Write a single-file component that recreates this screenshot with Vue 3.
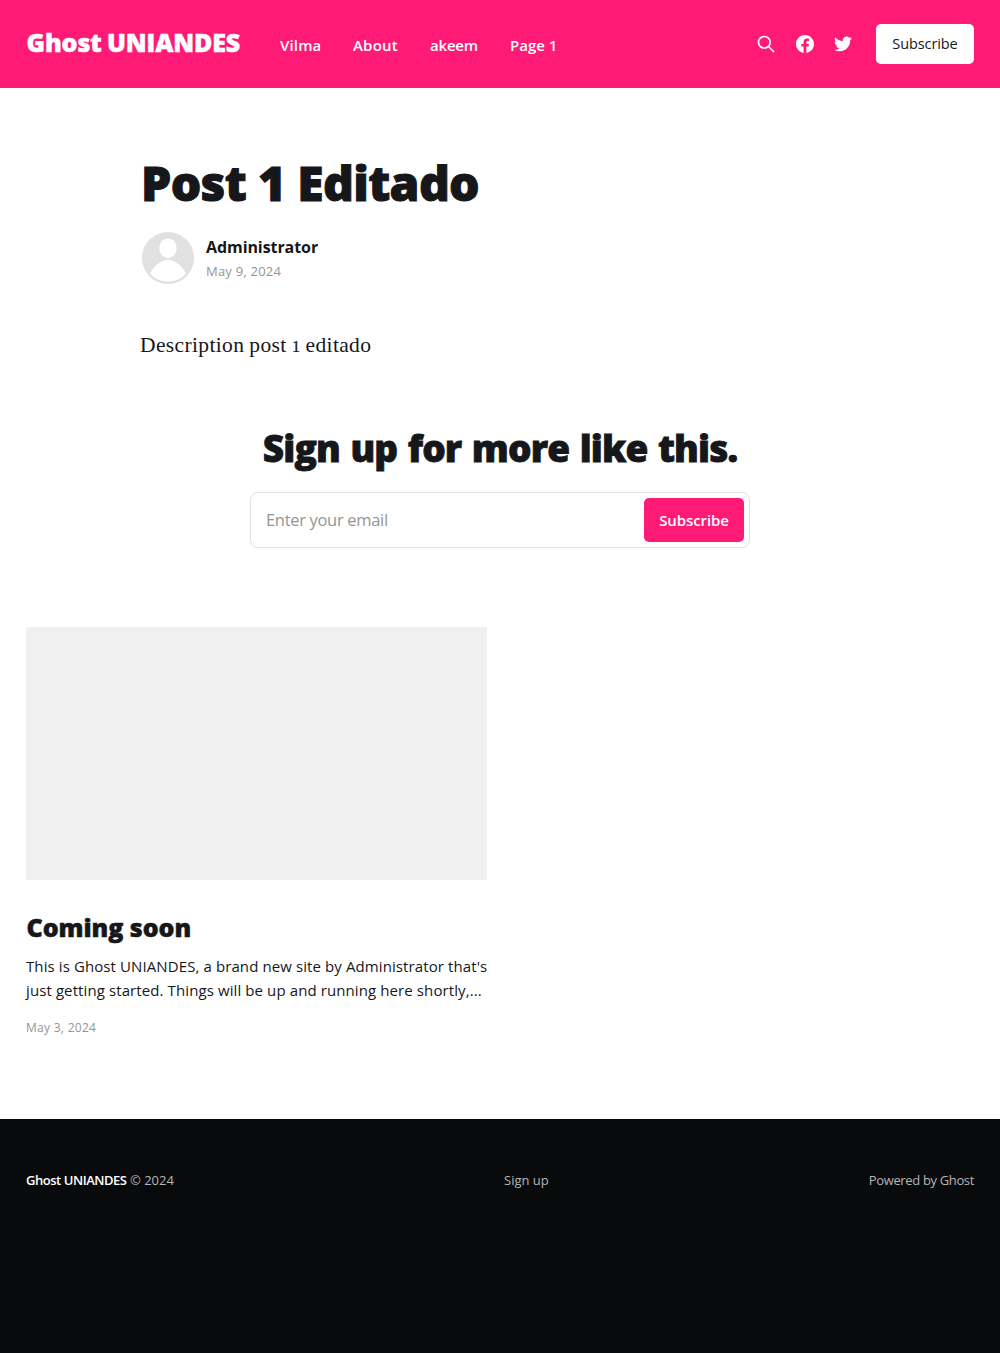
<script setup>
const nav = [
  { label: 'Vilma', cls: 'n1' },
  { label: 'About', cls: 'n2' },
  { label: 'akeem', cls: 'n3' },
  { label: 'Page 1', cls: 'n4' },
]
</script>

<template>
  <div class="site">
    <header class="head">
      <a class="logo"><span>Ghost UNIANDES</span></a>
      <nav class="menu">
        <a v-for="n in nav" :key="n.label" :class="n.cls">{{ n.label }}</a>
      </nav>
      <div class="actions">
        <svg class="search" width="20" height="20" viewBox="0 0 24 24" fill="none" stroke="#fff" stroke-width="2" stroke-linecap="round" stroke-linejoin="round">
          <path d="M21 21l-6-6m2-5a7 7 0 11-14 0 7 7 0 0114 0z" />
        </svg>
        <svg class="facebook" width="18" height="18" viewBox="0 0 24 24" fill="#fff">
          <path d="M23.9981 11.9991C23.9981 5.37216 18.626 0 11.9991 0C5.37216 0 0 5.37216 0 11.9991C0 17.9882 4.38789 22.9522 10.1242 23.8524V15.4676H7.07758V11.9991H10.1242V9.35553C10.1242 6.34826 11.9156 4.68714 14.6564 4.68714C15.9692 4.68714 17.3424 4.92149 17.3424 4.92149V7.87439H15.8294C14.3388 7.87439 13.8739 8.79933 13.8739 9.74824V11.9991H17.2018L16.6698 15.4676H13.8739V23.8524C19.6103 22.9522 23.9981 17.9882 23.9981 11.9991Z" />
        </svg>
        <svg class="twitter" width="18" height="18" viewBox="0 0 24 24" fill="#fff">
          <path d="M23.954 4.569a10 10 0 01-2.825.775 4.958 4.958 0 002.163-2.723c-.951.555-2.005.959-3.127 1.184a4.92 4.92 0 00-8.384 4.482C7.691 8.094 4.066 6.13 1.64 3.161a4.822 4.822 0 00-.666 2.475c0 1.71.87 3.213 2.188 4.096a4.904 4.904 0 01-2.228-.616v.061a4.923 4.923 0 003.946 4.827 4.996 4.996 0 01-2.212.085 4.937 4.937 0 004.604 3.417 9.868 9.868 0 01-6.102 2.105c-.39 0-.779-.023-1.17-.067a13.995 13.995 0 007.557 2.209c9.054 0 13.999-7.496 13.999-13.986 0-.209 0-.42-.015-.63a9.936 9.936 0 002.46-2.548l-.047-.02z" />
        </svg>
        <button class="join"><span>Subscribe</span></button>
      </div>
    </header>

    <main>
      <article class="post">
        <h1>Post 1 Editado</h1>
        <div class="byline">
          <svg class="avatar" width="52" height="52" viewBox="0 0 52 52">
            <circle cx="26" cy="26" r="26" fill="#e1e1e1" />
            <ellipse cx="26" cy="16.2" rx="8.8" ry="9.8" fill="#fff" />
            <path d="M8 41.5C12.5 33.2 18.6 28 26 28s13.500 5.200 18 13.500C39.800 46.500 33.400 49.500 26 49.500S12.200 46.500 8 41.500z" fill="#fff" />
          </svg>
          <div class="meta">
            <h4>Administrator</h4>
            <time>May 9, 2024</time>
          </div>
        </div>
        <p class="content">Description post <span class="oldstyle">1</span> editado</p>
      </article>

      <section class="signup">
        <h2>Sign up for more like this.</h2>
        <div class="field">
          <span class="placeholder">Enter your email</span>
          <button class="submit"><span>Subscribe</span></button>
        </div>
      </section>

      <section class="card">
        <div class="thumb"></div>
        <h3>Coming soon</h3>
        <p class="excerpt">
          <span class="line">This is Ghost UNIANDES, a brand new site by Administrator that's</span>
          <span class="line">just getting started. Things will be up and running here shortly,...</span>
        </p>
        <time>May 3, 2024</time>
      </section>
    </main>

    <footer class="foot">
      <div class="copy"><b>Ghost UNIANDES</b> <span>© 2024</span></div>
      <a class="sign">Sign up</a>
      <a class="powered">Powered by Ghost</a>
    </footer>
  </div>
</template>

<style>
body { margin: 0; background: #fff; }
</style>

<style scoped>
.site {
  width: 1000px;
  min-height: 1353px;
  display: flex;
  flex-direction: column;
  font-family: "Open Sans", "Noto Sans", sans-serif;
  color: #15171a;
  white-space: nowrap;
}
h1, h2, h3, h4, p { margin: 0; }
button { border: 0; padding: 0; font-family: inherit; }
.head {
  box-sizing: border-box;
  height: 88px;
  padding: 0 26px;
  display: flex;
  align-items: center;
  background: #ff1a75;
  color: #fff;
}
.logo {
  width: 254px;
  font-size: 25px;
  font-weight: 800;
  line-height: 34px;
  letter-spacing: -0.1px;
  word-spacing: -1px;
  margin-top: -4px;
  -webkit-text-stroke: 0.5px #fff;
}
.logo span { padding-left: 0.5px; }
.menu { display: flex; font-size: 15px; font-weight: 600; line-height: 20px; margin-top: 1px; }
.n1 { width: 73px; letter-spacing: 0.15px; }
.n2 { width: 77px; letter-spacing: 0.2px; }
.n3 { width: 80px; letter-spacing: -0.2px; }
.n4 { width: 60px; }
.actions { margin-left: auto; display: flex; align-items: center; }
.search { margin-right: 20px; }
.facebook { margin-right: 20px; }
.twitter { margin-right: 24px; }
.join {
  width: 98px;
  height: 40px;
  border-radius: 5px;
  background: #fff;
  color: #15171a;
  font-size: 14.5px;
  line-height: 40px;
  letter-spacing: -0.1px;
}
.post { margin: 71px 0 0 140px; height: 261px; }
.post h1 {
  padding-left: 1px;
  font-size: 48px;
  font-weight: 800;
  line-height: 48px;
  letter-spacing: -0.65px;
  -webkit-text-stroke: 1px #15171a;
}
.byline { display: flex; margin: 25px 0 0 2px; height: 52px; }
.meta { margin: 4px 0 0 12px; }
.meta h4 { font-size: 16px; line-height: 22px; font-weight: 700; letter-spacing: -0.08px; }
.meta time { display: block; font-size: 13px; line-height: 18px; margin-top: 4px; color: #959595; letter-spacing: 0.22px; }
.content {
  margin-top: 45px;
  font-family: "Liberation Serif", serif;
  font-size: 21.5px;
  line-height: 32px;
  letter-spacing: 0.36px;
  word-spacing: -0.7px;
}
.oldstyle { font-size: 17px; -webkit-text-stroke: 0.2px #15171a; }
.signup { width: 500px; margin: 7px auto 0; text-align: center; }
.signup h2 {
  font-size: 37px;
  font-weight: 800;
  line-height: 42px;
  letter-spacing: -0.88px;
  word-spacing: 1.8px;
  -webkit-text-stroke: 0.8px #15171a;
}
.field {
  box-sizing: border-box;
  height: 56px;
  margin-top: 23px;
  padding: 0 5px 0 15px;
  display: flex;
  align-items: center;
  justify-content: space-between;
  border: 1px solid #e1e1e1;
  border-radius: 8px;
}
.placeholder { font-size: 16.5px; line-height: 22px; margin-top: -1px; color: #959595; letter-spacing: -0.32px; }
.submit {
  width: 100px;
  height: 44px;
  border-radius: 5px;
  background: #ff1a75;
  color: #fff;
  font-size: 15px;
  font-weight: 600;
  line-height: 44px;
  letter-spacing: -0.1px;
}
.card { width: 461px; margin: 79px 0 0 26px; }
.thumb { height: 253px; background: #f0f0f0; }
.card h3 { padding-left: 0.5px; margin-top: 31px; font-size: 25px; font-weight: 800; line-height: 32px; letter-spacing: -0.05px; -webkit-text-stroke: 0.5px #15171a; }
.excerpt { margin-top: 11px; font-size: 15px; line-height: 24px; letter-spacing: 0.1px; }
.line { display: block; }
.card time { display: block; margin-top: 17px; font-size: 12px; line-height: 18px; color: #959595; letter-spacing: 0.28px; }
.foot {
  box-sizing: border-box;
  height: 234px;
  margin-top: auto;
  padding: 51px 26px 0;
  display: grid;
  grid-template-columns: 478px 1fr auto;
  align-items: start;
  background: #090a0b;
  color: #b5b6b6;
  font-size: 13px;
  line-height: 20px;
}
.copy b { color: #fff; font-weight: 600; letter-spacing: -0.46px; }
.powered { letter-spacing: -0.35px; }
</style>
